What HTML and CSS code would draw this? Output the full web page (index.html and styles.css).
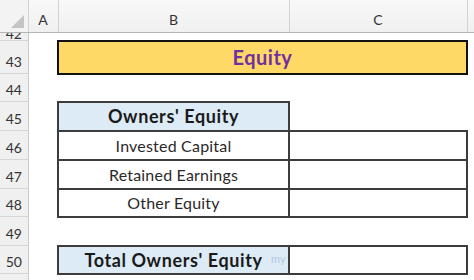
FILE: index.html
```html
<!DOCTYPE html>
<html>
<head>
<meta charset="utf-8">
<link rel="stylesheet" href="styles.css">
</head>
<body>
<table class="sheet">
  <colgroup>
    <col class="c-rh"><col class="c-a"><col class="c-b"><col class="c-c"><col class="c-d">
  </colgroup>
  <tr class="r-head">
    <td class="corner"><svg width="28" height="32" viewBox="0 0 28 32"><polygon points="24,15 24,28 11,28" fill="#c4c4c4"/></svg></td>
    <td class="colhead">A</td>
    <td class="colhead">B</td>
    <td class="colhead">C</td>
    <td class="colhead last"></td>
  </tr>
  <tr class="r-42">
    <td class="rowhead"><div class="cut"><span>42</span></div></td>
    <td></td><td></td><td></td><td></td>
  </tr>
  <tr class="r-43">
    <td class="rowhead">43</td>
    <td></td>
    <td class="title" colspan="2">Equity</td>
    <td></td>
  </tr>
  <tr class="r-44">
    <td class="rowhead">44</td>
    <td></td><td></td><td></td><td></td>
  </tr>
  <tr class="r-45">
    <td class="rowhead">45</td>
    <td></td>
    <td class="box head">Owners' Equity</td>
    <td class="blank"></td>
    <td></td>
  </tr>
  <tr class="r-46">
    <td class="rowhead">46</td>
    <td></td>
    <td class="box item">Invested Capital</td>
    <td class="box"></td>
    <td></td>
  </tr>
  <tr class="r-47">
    <td class="rowhead">47</td>
    <td></td>
    <td class="box item">Retained Earnings</td>
    <td class="box"></td>
    <td></td>
  </tr>
  <tr class="r-48">
    <td class="rowhead">48</td>
    <td></td>
    <td class="box item">Other Equity</td>
    <td class="box"></td>
    <td></td>
  </tr>
  <tr class="r-49">
    <td class="rowhead">49</td>
    <td></td><td></td><td></td><td></td>
  </tr>
  <tr class="r-50">
    <td class="rowhead">50</td>
    <td></td>
    <td class="box head total">Total Owners' Equity<span class="mark">my</span></td>
    <td class="box"></td>
    <td></td>
  </tr>
  <tr class="r-51">
    <td class="rowhead"></td>
    <td></td><td></td><td></td><td></td>
  </tr>
</table>
</body>
</html>
```
FILE: styles.css
```css
html, body {
  margin: 0;
  padding: 0;
  background: #ffffff;
  overflow: hidden;
}

.sheet {
  border-collapse: collapse;
  table-layout: fixed;
  width: 474px;
  font-family: Lato, "Open Sans", sans-serif;
  color: #222222;
}

.sheet td {
  padding: 0;
  overflow: hidden;
  white-space: nowrap;
}

.c-rh { width: 28px; }
.c-a { width: 30px; }
.c-b { width: 231px; }
.c-c { width: 178px; }
.c-d { width: 7px; }

.r-head { height: 32px; }
.r-42 { height: 8px; }
.r-43 { height: 33px; }
.r-44 { height: 28px; }
.r-45 { height: 29px; }
.r-46 { height: 29px; }
.r-47 { height: 29px; }
.r-48 { height: 28px; }
.r-49 { height: 29px; }
.r-50 { height: 28px; }
.r-51 { height: 10px; }

.corner {
  background: #f3f3f3;
  border-right: 1px solid #d2d2d2;
  border-bottom: 1px solid #b4b4b4;
  vertical-align: top;
  line-height: 0;
}

.colhead {
  background: linear-gradient(#f8f8f8, #f0f0f0);
  border-right: 1px solid #d2d2d2;
  border-bottom: 1px solid #b4b4b4;
  text-align: center;
  vertical-align: bottom;
  padding-bottom: 4px !important;
  font-size: 14px;
  color: #333333;
}

.colhead.last {
  border-right: 1px solid #c8c8c8;
}

.rowhead {
  background: #f0f0f0;
  border-right: 1px solid #c8c8c8;
  border-bottom: 1px solid #d6d6d6;
  text-align: center;
  vertical-align: bottom;
  padding-bottom: 3px !important;
  font-size: 14px;
  color: #333333;
}

.r-42 .rowhead {
  padding-bottom: 0 !important;
}

.cut {
  height: 7px;
  overflow: hidden;
  display: flex;
  align-items: flex-end;
  justify-content: center;
  line-height: 14px;
}

.cut span {
  display: block;
  margin-bottom: -1px;
}

.title {
  background: #ffd966;
  border: 2px solid #111111;
  text-align: center;
  font-weight: 700;
  font-size: 20px;
  letter-spacing: 0.5px;
  color: #7030a0;
}

.box {
  border: 2px solid #3c3c3c;
  text-align: center;
  font-size: 16px;
  letter-spacing: 0.2px;
  color: #2a2a2a;
}

.box.head {
  background: #ddebf7;
  font-weight: 700;
  font-size: 18px;
  letter-spacing: 0.6px;
  color: #1a1a1a;
  position: relative;
}

.blank {
  border-left: 2px solid #3c3c3c;
}

.mark {
  position: absolute;
  left: 212px;
  top: 5px;
  font-size: 11px;
  font-weight: 400;
  letter-spacing: 0;
  color: #b6c6de;
}
```
